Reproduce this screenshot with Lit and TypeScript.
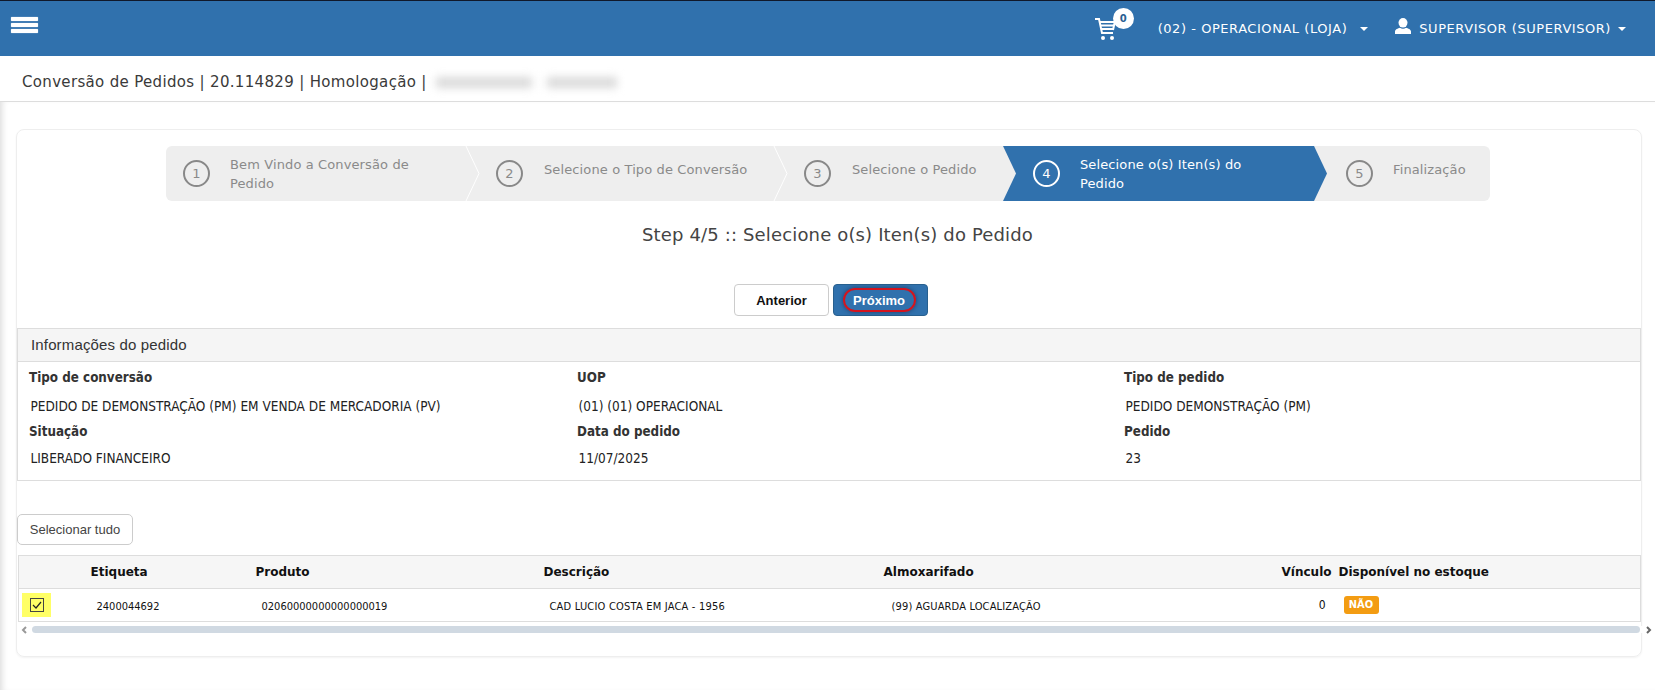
import { LitElement, html, css, svg } from "lit";
import { customElement } from "lit/decorators.js";

const steps = [
  { n: 1, label: "Bem Vindo a Conversão de Pedido", w: 300, cls: "first", line: true },
  { n: 2, label: "Selecione o Tipo de Conversão", w: 308, cls: "", line: true },
  { n: 3, label: "Selecione o Pedido", w: 229, cls: "", line: false },
  { n: 4, label: "Selecione o(s) Iten(s) do Pedido", w: 311, cls: "active", line: false },
  { n: 5, label: "Finalização", w: 176, cls: "last", line: false },
];

const info = [
  ["Tipo de conversão", "PEDIDO DE DEMONSTRAÇÃO (PM) EM VENDA DE MERCADORIA (PV)"],
  ["UOP", "(01) (01) OPERACIONAL"],
  ["Tipo de pedido", "PEDIDO DEMONSTRAÇÃO (PM)"],
  ["Situação", "LIBERADO FINANCEIRO"],
  ["Data do pedido", "11/07/2025"],
  ["Pedido", "23"],
];

@customElement("app-root")
export class AppRoot extends LitElement {
  static styles = css`
    :host { display: block; min-height: 690px; background: #fff; color: #333; font-family: "DejaVu Sans", Verdana, sans-serif; }
    * { box-sizing: border-box; }
    .topbar { height: 56px; background: #3071ad; border-top: 1px solid #10182a; display: flex; align-items: center; color: #fff; padding-left: 11px; }
    .burger { width: 27px; display: flex; flex-direction: column; gap: 2px; margin-bottom: 7px; }
    .burger i { height: 4px; background: #fff; border-radius: 1px; box-shadow: 0 0 1px #fff; }
    .cart { position: relative; margin-left: auto; width: 22px; height: 22px; margin-top: 1px; }
    .cart svg { display: block; }
    .badge { position: absolute; left: 18px; top: -10px; width: 21px; height: 21px; border-radius: 50%; background: #fff; color: #2a5f93; font-size: 10px; font-weight: 700; display: flex; align-items: center; justify-content: center; }
    .menu { font-size: 13px; letter-spacing: 0.55px; white-space: nowrap; display: flex; align-items: center; }
    .unit { margin-left: 41px; }
    .user { margin-left: 27px; margin-right: 29px; }
    .user svg { margin-right: 8px; margin-top: -5px; }
    .caret { width: 0; height: 0; border-left: 4px solid transparent; border-right: 4px solid transparent; border-top: 4px solid #fff; margin-left: 13px; }
    .user .caret { margin-left: 7px; }
    .crumb { height: 46px; border-bottom: 1px solid #ddd; padding: 7px 0 0 22px; display: flex; align-items: center; font-size: 15px; letter-spacing: 0.33px; color: #3a3a3a; white-space: nowrap; }
    .blur { display: inline-flex; gap: 15px; margin-left: 9px; filter: blur(4px); }
    .blur i { height: 11px; background: #dadada; }
    .blur i:first-child { width: 96px; }
    .blur i:last-child { width: 70px; }
    .shell { padding: 27px 13px 0 16px; box-shadow: inset 6px 0 6px -4px rgba(0, 0, 0, 0.14); min-height: 588px; }
    .card { width: 1626px; height: 528px; border: 1px solid #eee; border-radius: 8px; padding-top: 16px; box-shadow: 0 1px 2px rgba(0,0,0,.05); }
    .wizard { display: flex; width: 1324px; height: 55px; margin-left: 149px; }
    .step { position: relative; background: #eee; color: #8a8a8a; display: flex; padding-left: 30px; font-size: 13px; letter-spacing: 0.12px; line-height: 19px; }
    .step.first { border-radius: 6px 0 0 6px; padding-left: 17px; }
    .step.last { border-radius: 0 6px 6px 0; padding-left: 32px; }
    .step.active { background: #3071ad; color: #fff; }
    .circle { flex: none; width: 27px; height: 27px; margin-top: 14px; border: 2px solid #888; border-radius: 50%; display: flex; align-items: center; justify-content: center; font-size: 13px; letter-spacing: 0; }
    .active .circle { border-color: #fff; }
    .label { margin-left: 21px; padding-top: 9px; max-width: 205px; }
    .first .label, .active .label, .last .label { margin-left: 20px; }
    .label.one { padding-top: 14px; max-width: none; white-space: nowrap; }
    .tip { position: absolute; left: 100%; top: 0; z-index: 1; overflow: visible; }
    h2 { margin: 22px 0 0; height: 24px; line-height: 24px; text-align: center; font-size: 18px; letter-spacing: 0.15px; font-weight: 400; color: #444; padding-left: 17px; }
    .actions { display: flex; justify-content: center; gap: 4px; margin-top: 37px; padding-left: 4px; }
    .btn { font-family: "Liberation Sans", Arial, sans-serif; font-size: 13px; font-weight: 700; width: 95px; height: 32px; border-radius: 4px; display: flex; align-items: center; justify-content: center; border: 1px solid #ccc; background: #fff; color: #111; padding: 0; }
    .btn.primary { background: #3071ad; border-color: #28608f; color: #fff; padding: 0 3px 0 0; }
    .btn .ring { width: 73px; height: 24px; border: 2px solid #d3141e; border-radius: 12px; display: flex; align-items: center; justify-content: center; box-shadow: 0 0 4px rgba(20, 30, 60, 0.6); }
    .panel { margin: 12px 0 0 0; border: 1px solid #ddd; height: 153px; }
    .panel-head { height: 33px; background: #f5f5f5; border-bottom: 1px solid #ddd; padding-left: 13px; font: 15px/32px "Liberation Sans", Arial, sans-serif; letter-spacing: 0.15px; color: #333; }
    .grid { display: grid; grid-template-columns: 548px 547px 1fr; padding: 2px 0 0 11px; font-family: "DejaVu Sans Condensed", "DejaVu Sans", sans-serif; font-stretch: condensed; font-size: 13.5px; color: #222; }
    .pair { height: 54px; }
    .pair b { display: block; height: 28px; line-height: 28px; font-size: 13.3px; font-weight: 700; color: #333; }
    .pair span { display: block; line-height: 28px; padding-left: 1.5px; }
    .pair:nth-child(n + 4) span { margin-top: -2px; }
    .select { margin-top: 33px; width: 116px; height: 31px; display: flex; align-items: center; justify-content: center; border: 1px solid #ccc; border-radius: 5px; background: #fff; font: 13px "Liberation Sans", Arial, sans-serif; color: #444; padding: 0; }
    table { margin: 10px 0 0 1px; width: 1623px; border-collapse: collapse; table-layout: fixed; border: 1px solid #ddd; }
    th { height: 33px; background: #f6f6f6; border-bottom: 1px solid #ddd; text-align: left; font-size: 12px; font-weight: 700; color: #111; padding: 0 0 0 6px; white-space: nowrap; }
    td { height: 33px; font-family: "DejaVu Sans Condensed", "DejaVu Sans", sans-serif; font-stretch: condensed; font-size: 11px; color: #111; padding: 2px 0 0 12px; white-space: nowrap; }
    td.desc { letter-spacing: 0.2px; }
    td.alx { padding-left: 14px; letter-spacing: 0.15px; }
    th.num { text-align: right; padding: 0 1px 0 0; }
    td.num { text-align: right; padding: 0 7px 0 0; font-size: 12px; }
    td.st { padding: 0 0 0 11px; }
    td.chk { padding: 0 0 0 3px; }
    .yellow { width: 29px; height: 24px; background: #ffff66; display: flex; align-items: center; justify-content: center; }
    .box { width: 14px; height: 14px; border: 1px solid #444; display: flex; align-items: center; justify-content: center; }
    .tag { display: inline-block; width: 35px; height: 18px; line-height: 18px; text-align: center; background: #f39c12; color: #fff; font-size: 11px; font-weight: 700; border-radius: 3px; }
    .scroll { display: flex; align-items: center; height: 7px; margin: 4px -12px 0 4px; background: #fff; position: relative; }
    .scroll .bar { flex: none; width: 1608px; height: 7px; margin-left: 5px; border-radius: 4px; background: #d0d9e2; }
    .scroll svg { flex: none; display: block; }
    .scroll svg:last-child { margin-left: 6px; }
  `;

  private tip(line: boolean, fill: string) {
    return html`<svg class="tip" width="14" height="55" viewBox="0 0 14 55">
      ${svg`<path d="M0 0L13 27.500L0 55Z" fill=${fill}></path>`}
      ${line ? svg`<path d="M0 0L13 27.500L0 55" fill="none" stroke="#fff" stroke-width="1"></path>` : null}
    </svg>`;
  }

  render() {
    return html`
      <header class="topbar">
        <div class="burger"><i></i><i></i><i></i></div>
        <div class="cart">
          <svg width="22" height="22" viewBox="0 0 22 22" fill="none" stroke="#fff" stroke-width="2">
            <path d="M0 1H4L7 15H18"></path>
            <path d="M5 4H20M5.6 7.500H19M6.400 11H18"></path>
            <path d="M20 3L18 12"></path>
            <circle cx="8" cy="20" r="2" fill="#fff" stroke="none"></circle>
            <circle cx="17" cy="20" r="2" fill="#fff" stroke="none"></circle>
          </svg>
          <span class="badge">0</span>
        </div>
        <div class="menu unit">(02) - OPERACIONAL (LOJA)<span class="caret"></span></div>
        <div class="menu user">
          <svg width="16" height="16" viewBox="0 0 16 16" fill="#fff"><ellipse cx="8" cy="4.800" rx="4.500" ry="4.800"></ellipse><path d="M0 16V13.500C0 11.500 3 10.500 5 9.800C6.500 11 9.500 11 11 9.800C13 10.500 16 11.500 16 13.500V16Z"></path></svg>
          SUPERVISOR (SUPERVISOR)<span class="caret"></span>
        </div>
      </header>
      <div class="crumb">Conversão de Pedidos | 20.114829 | Homologação |<span class="blur"><i></i><i></i></span></div>
      <div class="shell">
        <section class="card">
          <div class="wizard">
            ${steps.map(
              (s) => html`
                <div class="step ${s.cls}" style="width:${s.w}px">
                  <span class="circle">${s.n}</span>
                  <span class="label ${s.n === 1 || s.n === 4 ? "" : "one"}">${s.label}</span>
                  ${s.n < 5 ? this.tip(s.line, s.n === 4 ? "#3071ad" : "#eee") : null}
                </div>
              `
            )}
          </div>
          <h2>Step 4/5 :: Selecione o(s) Iten(s) do Pedido</h2>
          <div class="actions">
            <button class="btn">Anterior</button>
            <button class="btn primary"><span class="ring">Próximo</span></button>
          </div>
          <div class="panel">
            <div class="panel-head">Informações do pedido</div>
            <div class="grid">
              ${info.map(([k, v]) => html`<div class="pair"><b>${k}</b><span>${v}</span></div>`)}
            </div>
          </div>
          <button class="select">Selecionar tudo</button>
          <table>
            <colgroup><col style="width:66px" /><col style="width:165px" /><col style="width:288px" /><col style="width:340px" /><col style="width:300px" /><col style="width:155px" /><col /></colgroup>
            <thead>
              <tr><th></th><th>Etiqueta</th><th>Produto</th><th>Descrição</th><th>Almoxarifado</th><th class="num">Vínculo</th><th>Disponível no estoque</th></tr>
            </thead>
            <tbody>
              <tr>
                <td class="chk"><div class="yellow"><span class="box"><svg width="10" height="8" viewBox="0 0 10 8" fill="none" stroke="#222" stroke-width="1.200"><path d="M1 4L4 7L9 1"></path></svg></span></div></td>
                <td>2400044692</td>
                <td>02060000000000000019</td>
                <td class="desc">CAD LUCIO COSTA EM JACA - 1956</td>
                <td class="alx">(99) AGUARDA LOCALIZAÇÃO</td>
                <td class="num">0</td>
                <td class="st"><span class="tag">NÃO</span></td>
              </tr>
            </tbody>
          </table>
          <div class="scroll">
            <svg width="6" height="8" viewBox="0 0 6 8" fill="none" stroke="#999" stroke-width="2"><path d="M5 1L2 4L5 7"></path></svg>
            <div class="bar"></div>
            <svg width="6" height="8" viewBox="0 0 6 8" fill="none" stroke="#666" stroke-width="2"><path d="M1 1L4 4L1 7"></path></svg>
          </div>
        </section>
      </div>
    `;
  }
}
